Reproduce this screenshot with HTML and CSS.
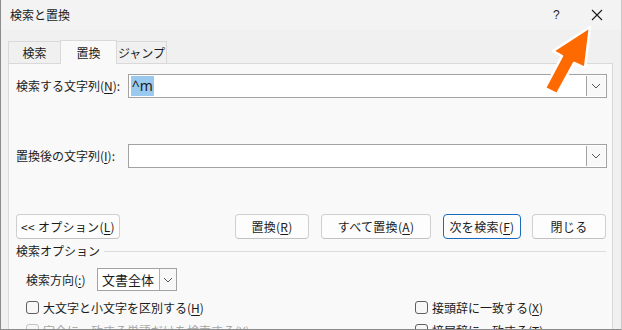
FILE: index.html
```html
<!DOCTYPE html>
<html lang="ja">
<head>
<meta charset="utf-8">
<title>検索と置換</title>
<link rel="stylesheet" href="styles.css">
</head>
<body>
<div class="window">
  <div class="titlebar">
    <span class="title">検索と置換</span>
    <span class="help">?</span>
    <span class="close"><svg width="12" height="12" viewBox="0 0 12 12"><path d="M1 1L11 11M11 1L1 11" stroke="#1a1a1a" stroke-width="1.1" fill="none"/></svg></span>
  </div>
  <div class="tabs">
    <div class="tab">検索</div>
    <div class="tab active">置換</div>
    <div class="tab">ジャンプ</div>
  </div>
  <div class="panel">
    <div class="field-row first">
      <label class="field-label">検索する文字列(<u>N</u>):</label>
      <div class="combo">
        <span class="combo-text"><span class="sel">^m</span></span>
        <span class="combo-btn"><svg width="10" height="6" viewBox="0 0 10 6"><path d="M1 1L5 5L9 1" stroke="#555" fill="none"/></svg></span>
      </div>
    </div>
    <div class="field-row second">
      <label class="field-label">置換後の文字列(<u>I</u>):</label>
      <div class="combo">
        <span class="combo-text"></span>
        <span class="combo-btn"><svg width="10" height="6" viewBox="0 0 10 6"><path d="M1 1L5 5L9 1" stroke="#555" fill="none"/></svg></span>
      </div>
    </div>
    <div class="buttons">
      <button class="btn w-opt">&lt;&lt; オプション(<u>L</u>)</button>
      <button class="btn w-rep push">置換(<u>R</u>)</button>
      <button class="btn w-all">すべて置換(<u>A</u>)</button>
      <button class="btn w-next default">次を検索(<u>F</u>)</button>
      <button class="btn w-close">閉じる</button>
    </div>
    <div class="group-head">
      <span>検索オプション</span>
      <span class="group-line"></span>
    </div>
    <div class="dir-row">
      <span class="dir-label">検索方向(<u>:</u>)</span>
      <div class="select">
        <span class="select-text">文書全体</span>
        <span class="select-btn"><svg width="10" height="6" viewBox="0 0 10 6"><path d="M1 1L5 5L9 1" stroke="#555" fill="none"/></svg></span>
      </div>
    </div>
    <div class="checks">
      <div class="check-col left">
        <div class="check"><span class="box"></span>大文字と小文字を区別する(<u>H</u>)</div>
        <div class="check disabled"><span class="box"></span>完全に一致する単語だけを検索する(<u>Y</u>)</div>
      </div>
      <div class="check-col right">
        <div class="check"><span class="box"></span>接頭辞に一致する(<u>X</u>)</div>
        <div class="check"><span class="box"></span>接尾辞に一致する(<u>T</u>)</div>
      </div>
    </div>
  </div>
  <svg class="arrow" width="70" height="90" viewBox="540 20 70 90">
    <polygon points="590,27 585,68 574,63 557,94 545,88 562,56 553,51" fill="#ff6a00" stroke="#ffffff" stroke-width="2.5" stroke-linejoin="round"/>
  </svg>
</div>
</body>
</html>
```

FILE: styles.css
```css
* { box-sizing: border-box; }
html, body { margin: 0; padding: 0; }
body {
  font-family: "Noto Sans CJK JP", "Noto Sans", sans-serif;
  font-size: 12px;
  color: #1b1b1b;
  background: #f0f0f0;
}
u { text-decoration: underline; text-underline-offset: 2px; }

.window {
  position: relative;
  width: 622px;
  height: 330px;
  overflow: hidden;
  background: #f0f0f0;
  border-left: 1px solid #8c8c8c;
  border-bottom: 1px solid #8c8c8c;
  border-right: 1px solid #c8c8c8;
}

.titlebar {
  height: 30px;
  background: #f3f3f3;
  display: flex;
  align-items: center;
  padding-left: 9px;
}
.title { flex: 1; font-size: 12px; line-height: 16px; }
.help { width: 12px; font-size: 12px; font-family: "Liberation Sans", sans-serif; margin-right: 26px; }
.close { width: 12px; height: 12px; margin-right: 18px; display: flex; }

.tabs {
  height: 33px;
  display: flex;
  align-items: flex-end;
  padding-left: 7px;
}
.tab {
  height: 22px;
  border: 1px solid #d9d9d9;
  border-bottom: none;
  background: #f0f0f0;
  display: flex;
  align-items: center;
  justify-content: center;
  line-height: 16px;
}
.tab:nth-child(1) { width: 52px; border-right: none; }
.tab.active { width: 57px; height: 24px; background: #f9f9f9; margin-bottom: -1px; position: relative; z-index: 1; border-right: 1px solid #d9d9d9; }
.tab:nth-child(3) { width: 50px; border-left: none; }

.panel {
  margin-left: 7px;
  width: 605px;
  height: 280px;
  border: 1px solid #d9d9d9;
  background: #f9f9f9;
  padding: 10px 5px 0 7px;
}

.field-row { display: flex; align-items: center; height: 24px; }
.field-row.second { margin-top: 46px; }
.field-label { width: 112px; line-height: 16px; }
.combo {
  width: 480px;
  height: 24px;
  border: 1px solid #a2a2a2;
  background: #ffffff;
  display: flex;
  align-items: center;
  padding: 1px;
}
.combo-text { flex: 1; padding-left: 1px; display: flex; align-items: center; height: 100%; }
.sel {
  background: #9ac9ef;
  font-family: "Noto Sans", "Noto Sans CJK JP", sans-serif;
  font-size: 14px;
  line-height: 20px;
  padding: 0 1px;
}
.combo-btn {
  width: 19px;
  height: 20px;
  border-left: 1px solid #a2a2a2;
  background: #f8f8f8;
  display: flex;
  align-items: center;
  justify-content: center;
}

.buttons {
  margin-top: 46px;
  display: flex;
  gap: 12px;
  height: 25px;
}
.btn {
  font-family: inherit;
  font-size: 12px;
  color: #1b1b1b;
  height: 25px;
  background: #fdfdfd;
  border: 1px solid #d0d0d0;
  border-bottom-color: #c2c2c2;
  border-radius: 4px;
  padding: 0;
  line-height: 16px;
  letter-spacing: 0.3px;
}
.btn.default { border-color: #1a6ac0; }
.w-opt { width: 104px; }
.w-rep { width: 74px; }
.push { margin-left: auto; }
.w-all { width: 110px; }
.w-next { width: 78px; }
.w-close { width: 74px; margin-left: -1px; margin-right: 1px; }

.group-head {
  margin-top: 4px;
  display: flex;
  align-items: center;
  height: 16px;
  line-height: 16px;
}
.group-line { flex: 1; height: 1px; background: #dcdcdc; margin-left: 4px; margin-right: 1px; }

.dir-row {
  margin-top: 9px;
  margin-left: 10px;
  display: flex;
  align-items: center;
  height: 23px;
}
.dir-label { width: 71px; line-height: 16px; }
.select {
  width: 80px;
  height: 23px;
  border: 1px solid #a2a2a2;
  background: #ffffff;
  display: flex;
  align-items: center;
}
.select-text { flex: 1; padding-left: 4px; font-size: 13px; }
.select-btn {
  width: 17px;
  height: 21px;
  border-left: 1px solid #b0b0b0;
  background: #f8f8f8;
  display: flex;
  align-items: center;
  justify-content: center;
}

.checks { display: flex; margin-left: 10px; margin-top: 5px; }
.check-col.left { width: 389px; flex-shrink: 0; }
.check-col.right { flex: 1; min-width: 0; }
.check {
  display: flex;
  align-items: center;
  height: 23px;
  line-height: 16px;
  white-space: nowrap;
}
.box {
  width: 13px;
  height: 13px;
  border: 1px solid #5f5f5f;
  border-radius: 3px;
  background: #f7f7f7;
  margin-right: 4px;
  flex-shrink: 0;
}
.check.disabled { color: #a8a8a8; }
.check.disabled .box { border-color: #c4c4c4; }

.arrow { position: absolute; left: 539px; top: 20px; }
```
